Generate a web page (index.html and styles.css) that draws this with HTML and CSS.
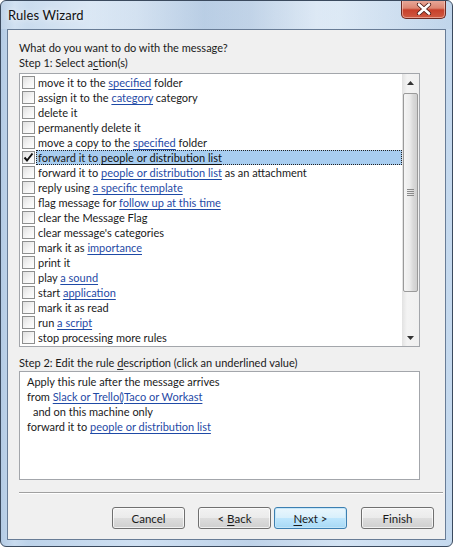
FILE: index.html
```html
<!DOCTYPE html>
<html>
<head>
<meta charset="utf-8">
<link rel="stylesheet" href="styles.css">
</head>
<body>
<div class="frame">
  <div class="titlebar">
    <span class="title">Rules Wizard</span>
    <div class="close">
      <svg width="20" height="12" viewBox="0 0 20 12"><path d="M5 1.5 L15 10.5 M15 1.5 L5 10.5" stroke="#4a1a14" stroke-width="4.2" stroke-linecap="round"/><path d="M5 1.5 L15 10.5 M15 1.5 L5 10.5" stroke="#fff" stroke-width="2.6" stroke-linecap="round"/></svg>
    </div>
  </div>
  <div class="client">
    <div class="label">What do you want to do with the message?</div>
    <div class="label">Step 1: Select a<u>c</u>tion(s)</div>
    <div class="listbox">
      <div class="rows">
        <div class="row"><span class="cb"></span><span class="txt">move it to the <a>specified</a> folder</span></div>
        <div class="row"><span class="cb"></span><span class="txt">assign it to the <a>category</a> category</span></div>
        <div class="row"><span class="cb"></span><span class="txt">delete it</span></div>
        <div class="row"><span class="cb"></span><span class="txt">permanently delete it</span></div>
        <div class="row"><span class="cb"></span><span class="txt">move a copy to the <a>specified</a> folder</span></div>
        <div class="row sel"><span class="cb"><svg width="11" height="11" viewBox="0 0 11 11"><path d="M1.5 5.5 L4 8.5 L9.5 1.5" fill="none" stroke="#111" stroke-width="2"/></svg></span><span class="txt">forward it to <a>people or distribution list</a></span></div>
        <div class="row"><span class="cb"></span><span class="txt">forward it to <a>people or distribution list</a> as an attachment</span></div>
        <div class="row"><span class="cb"></span><span class="txt">reply using <a>a specific template</a></span></div>
        <div class="row"><span class="cb"></span><span class="txt">flag message for <a>follow up at this time</a></span></div>
        <div class="row"><span class="cb"></span><span class="txt">clear the Message Flag</span></div>
        <div class="row"><span class="cb"></span><span class="txt">clear message's categories</span></div>
        <div class="row"><span class="cb"></span><span class="txt">mark it as <a>importance</a></span></div>
        <div class="row"><span class="cb"></span><span class="txt">print it</span></div>
        <div class="row"><span class="cb"></span><span class="txt">play <a>a sound</a></span></div>
        <div class="row"><span class="cb"></span><span class="txt">start <a>application</a></span></div>
        <div class="row"><span class="cb"></span><span class="txt">mark it as read</span></div>
        <div class="row"><span class="cb"></span><span class="txt">run <a>a script</a></span></div>
        <div class="row"><span class="cb"></span><span class="txt">stop processing more rules</span></div>
      </div>
      <div class="scrollbar">
        <div class="sbtn"><svg width="7" height="4" viewBox="0 0 7 4"><path d="M0 4 L3.5 0 L7 4 Z" fill="#333"/></svg></div>
        <div class="track">
          <div class="thumb"><span class="grip"></span></div>
        </div>
        <div class="sbtn"><svg width="7" height="4" viewBox="0 0 7 4"><path d="M0 0 L3.5 4 L7 0 Z" fill="#333"/></svg></div>
      </div>
    </div>
    <div class="label step2">Step 2: Edit the rule <u>d</u>escription (click an underlined value)</div>
    <div class="desc">
      <div class="dline">Apply this rule after the message arrives</div>
      <div class="dline">from <a>Slack or Trello<span class="odd">()</span>Taco or Workast</a></div>
      <div class="dline indent">and on this machine only</div>
      <div class="dline">forward it to <a>people or distribution list</a></div>
    </div>
    <div class="sep"></div>
    <div class="buttons">
      <button class="btn">Cancel</button>
      <button class="btn back">&lt; <u>B</u>ack</button>
      <button class="btn def"><u>N</u>ext &gt;</button>
      <button class="btn finish">Finish</button>
    </div>
  </div>
</div>
</body>
</html>
```
FILE: styles.css
```css
html, body {
  margin: 0;
  padding: 0;
  background: #fff;
}
body {
  font-family: Lato, "Noto Sans", sans-serif;
  font-size: 11px;
  color: #1a1a1a;
}
.frame {
  width: 453px;
  height: 547px;
  box-sizing: border-box;
  border: 1px solid #3b4a5e;
  border-radius: 6px;
  padding: 0 6px 6px 6px;
  background: linear-gradient(90deg, #b4cbe4 0%, #c8dbef 3%, #bdd3ea 6%, #cfe0f2 30%, #bfd3e9 55%, #d3e3f3 75%, #c5d9ee 100%);
  display: flex;
  flex-direction: column;
  overflow: hidden;
}
.titlebar {
  height: 28px;
  flex: none;
  display: flex;
  align-items: center;
  justify-content: space-between;
  background: linear-gradient(90deg, rgba(255,255,255,0.15) 0%, rgba(255,255,255,0.35) 20%, rgba(150,175,205,0.25) 45%, rgba(255,255,255,0.3) 70%, rgba(170,195,220,0.2) 100%);
  margin: 0 -6px;
  padding: 0 6px 0 7px;
}
.title {
  font-size: 13px;
  color: #111;
  letter-spacing: 0.1px;
  margin-top: -1px;
  text-shadow: 0 0 6px rgba(255,255,255,0.9);
}
.close {
  align-self: flex-start;
  width: 45px;
  height: 19px;
  box-sizing: border-box;
  margin-top: -1px;
  margin-right: 0px;
  border: 1px solid #6b2a22;
  border-top: none;
  border-radius: 0 0 5px 5px;
  background: linear-gradient(180deg, #e9ab9c 0%, #dc8672 45%, #c7402b 55%, #cf5a42 100%);
  box-shadow: inset 0 0 0 1px rgba(255,220,210,0.5);
  display: flex;
  align-items: center;
  justify-content: center;
}
.client {
  flex: 1;
  border: 1px solid #687c96;
  background: #f0f0f0;
  padding: 10px 0 0 11px;
  display: flex;
  flex-direction: column;
  align-items: flex-start;
}
.label {
  line-height: 15px;
  height: 15px;
  white-space: nowrap;
}
u { text-decoration: underline; text-underline-offset: 2px; }
.listbox {
  margin-top: 3px;
  width: 401px;
  height: 274px;
  box-sizing: border-box;
  border: 1px solid #a3a6ab;
  background: #fff;
  display: flex;
}
.rows {
  flex: 1;
  padding-top: 1px;
}
.row {
  height: 15px;
  display: flex;
  align-items: center;
  white-space: nowrap;
}
.cb {
  width: 13px;
  height: 13px;
  box-sizing: border-box;
  flex: none;
  margin: 0 1px 0 2px;
  border: 1px solid #8e8f8f;
  background: linear-gradient(135deg, #e0e0e0 0%, #f6f6f6 60%, #fff 100%);
  display: flex;
  align-items: center;
  justify-content: center;
}
.txt {
  flex: 1;
  height: 15px;
  line-height: 13px;
  box-sizing: border-box;
  padding-left: 1px;
  border: 1px solid transparent;
}
.sel .txt {
  background: #a8cdf0;
  border: 1px dotted #222;
}
a {
  color: #1f4aa6;
  text-decoration: underline;
  text-underline-offset: 2px;
}
.sel a { color: #111; }
.scrollbar {
  width: 17px;
  flex: none;
  display: flex;
  flex-direction: column;
  background: linear-gradient(90deg, #e2e2e2 0%, #f3f3f3 30%, #f0f0f0 100%);
}
.sbtn {
  height: 17px;
  flex: none;
  display: flex;
  align-items: center;
  justify-content: center;
}
.track {
  flex: 1;
  padding-top: 2px;
}
.thumb {
  margin-left: 1px;
  width: 15px;
  height: 199px;
  box-sizing: border-box;
  border: 1px solid #9a9a9a;
  border-radius: 2px;
  background: linear-gradient(90deg, #f5f5f5 0%, #ebebeb 45%, #d9d9d9 70%, #cfcfcf 100%);
  display: flex;
  align-items: center;
  justify-content: center;
}
.grip {
  width: 7px;
  height: 7px;
  background: repeating-linear-gradient(180deg, #8a8a8a 0 1px, transparent 1px 2px);
}
.step2 {
  margin-top: 8px;
}
.desc {
  margin-top: 1px;
  width: 401px;
  height: 109px;
  box-sizing: border-box;
  border: 1px solid #a3a6ab;
  background: #fff;
  padding: 2px 0 0 7px;
}
.dline {
  line-height: 15px;
  height: 15px;
  white-space: nowrap;
}
.indent { padding-left: 6px; }
.odd { letter-spacing: -1px; margin-right: 1px; }
.sep {
  margin-top: 12px;
  width: 424px;
  height: 1px;
  background: #a0a0a0;
  border-bottom: 1px solid #fff;
}
.buttons {
  margin-top: 13px;
  align-self: stretch;
  padding-right: 11px;
  display: flex;
  justify-content: flex-end;
}
.btn {
  width: 73px;
  height: 22px;
  box-sizing: border-box;
  border: 1px solid #707070;
  border-radius: 3px;
  font-family: inherit;
  font-size: 11.5px;
  color: #1a1a1a;
  padding: 0;
  background: linear-gradient(180deg, #f2f2f2 0%, #ebebeb 48%, #dddddd 52%, #cfcfcf 100%);
  box-shadow: inset 0 0 0 1px rgba(255,255,255,0.7);
}
.back { margin-left: 13px; }
.def {
  margin-left: 3px;
  border-color: #3c7fb1;
  background: linear-gradient(180deg, #eaf6fd 0%, #d9f0fc 48%, #bee6fd 52%, #a7d9f5 100%);
  box-shadow: inset 0 0 0 1px #c5e6f8;
}
.finish { margin-left: 14px; }
```
